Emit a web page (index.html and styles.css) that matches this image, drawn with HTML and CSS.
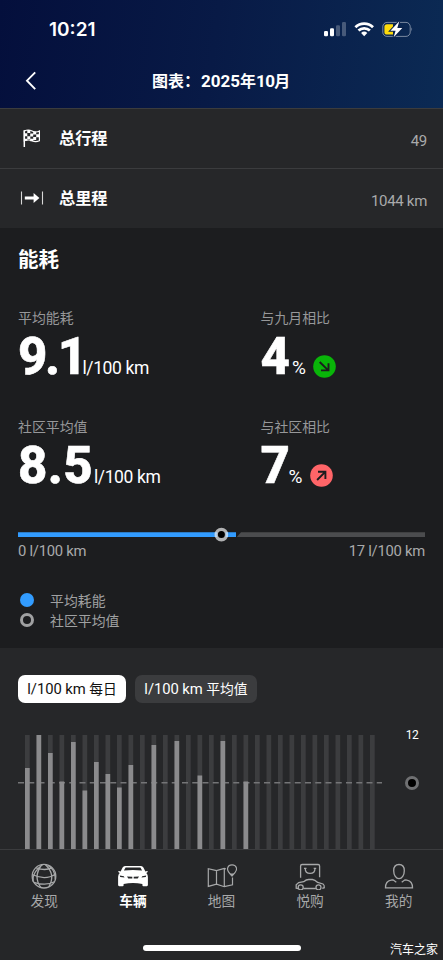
FILE: index.html
```html
<!DOCTYPE html>
<html lang="zh-CN">
<head>
<meta charset="utf-8">
<title>图表</title>
<link rel="stylesheet" href="styles.css">
</head>
<body>
<div class="app">
  <header class="header">
    <div class="status">
      <span class="clock">10:21</span>
      <svg class="status-icons" width="92" height="20" viewBox="322 20 92 20">
        <g fill="#fff"><rect x="324" y="31" width="4" height="5.2" rx="1.2"/><rect x="330" y="28.3" width="4" height="7.9" rx="1.2"/></g>
        <g fill="#fff" opacity=".25"><rect x="336" y="25.2" width="4" height="11" rx="1.2"/><rect x="342" y="22" width="4" height="14.2" rx="1.2"/></g>
        <g fill="none" stroke="#fff" stroke-width="2.8"><path d="M355.4 27.2a12.6 12.6 0 0 1 17.6 0"/><path d="M358.5 30.6a8.2 8.2 0 0 1 11.4 0"/></g>
        <path d="M364.2 36.2l-3.1-3.2a4.5 4.5 0 0 1 6.2 0z" fill="#fff"/>
        <rect x="382.8" y="22.4" width="27.4" height="14" rx="4.2" fill="none" stroke="#fff" stroke-opacity=".45"/>
        <path d="M411.4 27.2q1.7 2 0 4.4z" fill="#fff" opacity=".5"/>
        <path d="M387 24.2h6v10.4h-6q-2.6 0-2.6-2.6v-5.2q0-2.6 2.6-2.6z" fill="#fedb0b"/>
        <path d="M399.3 21.2l-8.9 9.6h5.2l-2 6.5 8.7-9.4h-5z" fill="#fff" stroke="#0b234c" stroke-width="2" paint-order="stroke"/>
      </svg>
    </div>
    <div class="nav">
      <svg class="back" width="12" height="20" viewBox="0 0 12 20"><path d="M10.2 1.4L2 9.7l8.2 8.5" fill="none" stroke="#fff" stroke-width="1.9"/></svg>
      <h1 class="title">图表：<span class="title-num">2025</span>年<span class="title-ten">10</span>月</h1>
    </div>
  </header>

  <section class="rows">
    <div class="row">
      <svg class="row-icon" width="24" height="24" viewBox="20 126 24 24">
        <path d="M24.3 129.2V146" stroke="#fff" stroke-width="1.5"/>
        <path d="M24.3 130q4-2 7.8 0t7.3 0v9.8q-3.8 1.6-7.3 0t-7.8 0z" fill="none" stroke="#fff" stroke-width="1.2"/>
        <path d="M27.3 129h3v3.1h-3zM33.2 130.6h3v3h-3zM24.3 132.2h3v3h-3zM30.2 132.4h3v3h-3zM36.2 133.2h3v3h-3zM27.3 135.2h3v3h-3zM33.2 136h3v3h-3zM24.3 137.8h3v2h-3zM30.2 137.8h3v2.5h-3z" fill="#fff"/>
      </svg>
      <span class="row-name">总行程</span>
      <span class="row-value">49</span>
    </div>
    <div class="row">
      <svg class="row-icon" width="24" height="24" viewBox="20 186 24 24">
        <path d="M21.5 191.5v13M42.5 191.5v13" stroke="#d8d8d8" stroke-width="1.1"/>
        <path d="M24.800 196.400h8.800V193l5.800 5-5.800 5v-3.400h-8.800z" fill="#fff"/>
      </svg>
      <span class="row-name">总里程</span>
      <span class="row-value">1044 km</span>
    </div>
  </section>

  <section class="usage">
    <h2 class="heading">能耗</h2>
    <div class="stats">
      <div class="stat">
        <div class="label">平均能耗</div>
        <div class="figure"><span class="big narrow">9.1</span><span class="unit">l/100 km</span></div>
      </div>
      <div class="stat">
        <div class="label">与九月相比</div>
        <div class="figure"><span class="big four">4</span><span class="unit">%</span>
          <svg class="badge" width="23" height="23" viewBox="0 0 23 23"><circle cx="11.5" cy="11.5" r="11.3" fill="#09b509"/><path d="M6.7 7l7.8 7.6M8 15.4h7.5V8.2" fill="none" stroke="#1b1c1e" stroke-width="1.9"/></svg>
        </div>
      </div>
      <div class="stat">
        <div class="label">社区平均值</div>
        <div class="figure"><span class="big">8.5</span><span class="unit">l/100 km</span></div>
      </div>
      <div class="stat">
        <div class="label">与社区相比</div>
        <div class="figure"><span class="big seven">7</span><span class="unit">%</span>
          <svg class="badge" width="23" height="23" viewBox="0 0 23 23"><circle cx="11.5" cy="11.5" r="11.3" fill="#ff6568"/><path d="M7.1 16l7.9-7.9M8 7.7h7.4v7.2" fill="none" stroke="#1b1c1e" stroke-width="1.9"/></svg>
        </div>
      </div>
    </div>
    <svg class="slider" width="407" height="16" viewBox="0 0 407 16">
      <path d="M0 5.2h218v4.8H0z" fill="#329cff"/>
      <path d="M223 5.2h184v4.8H218.8z" fill="#4b4c4e"/>
      <circle cx="203.4" cy="7.6" r="4.5" fill="#000"/>
      <circle cx="203.4" cy="7.6" r="5.2" fill="none" stroke="#b0b1b2" stroke-width="3.4"/>
      <path d="M199.3 5.2h-2.5v4.8h2.5q-1.2-2.4 0-4.8M207.5 5.2h2.5v4.8h-2.5q1.2-2.4 0-4.8" fill="#b3d7fb"/>
    </svg>
    <div class="scale"><span>0 l/100 km</span><span>17 l/100 km</span></div>
    <ul class="legend">
      <li><i class="dot"></i>平均耗能</li>
      <li><i class="ring"></i>社区平均值</li>
    </ul>
  </section>

  <section class="daily">
    <div class="pills">
      <span class="pill active"><span class="pill-unit">l/100 km</span> 每日</span>
      <span class="pill"><span class="pill-unit">l/100 km</span> 平均值</span>
    </div>
    <div class="plot">
      <svg class="bars" width="364" height="114" viewBox="18 735 364 114">
        <g id="tracks" fill="#3c3d3f"></g>
        <path d="M18 782.8h364" stroke="#747577" stroke-width="1.4" stroke-dasharray="6 4.25"/>
        <g id="values" fill="#8b8b8d"></g>
      </svg>
      <div class="axis"><span class="max">12</span><i class="ring mean"></i></div>
    </div>
  </section>

  <nav class="tabs">
    <div class="tab">
      <svg width="32" height="28" viewBox="28.3 862 32 28" fill="none" stroke="#a7a8a9" stroke-width="1.3">
        <circle cx="44.3" cy="876.2" r="11.8"/><path d="M41.8 865q-8.6 12-.6 22.500M45.500 864.500q11 10 3.500 22.500M43 864.500q-10.500 7.500-9.800 17M48 865.200q7.500 4 7.600 14M36.500 867.800q9 3.500 16-.2M32.600 874.500q13 6.500 23.300-.5M34.200 882.300q12 4 20.500-.5"/>
      </svg>
      <span>发现</span>
    </div>
    <div class="tab current">
      <svg width="32" height="28" viewBox="117 862 32 28">
        <path d="M125 866h16q1.600 0 2.400 1.600l2 3.900 1.600-.5q1 0 .7 1.100l-1.400 1q1.600 1.600 1.600 4v8q0 1.100-1.100 1.100h-3.400q-1 0-1-1v-1.300q-9.400-1.600-18.800 0v1.300q0 1-1 1h-3.400q-1.100 0-1.100-1.100v-8q0-2.400 1.600-4l-1.400-1q-.3-1.100.7-1.100l1.600.5 2-3.900q.8-1.600 2.400-1.600z" fill="#fff"/>
        <path d="M125.600 867.500h14.800l1.700 3q-9.100-1.200-18.200 0zM119.800 875.600l4 .7.700 1.300-4.300-.5zM146.200 875.600l-4 .7-.7 1.300 4.300-.5zM127 876.400l5.300.3v1.700h-4zM139 876.400l-5.300.3v1.700h4z" fill="#252628"/>
      </svg>
      <span>车辆</span>
    </div>
    <div class="tab">
      <svg width="32" height="28" viewBox="205.5 862 32 28" fill="none" stroke="#a7a8a9" stroke-width="1.2">
        <path d="M226.300 868.800l-1.500-.4-7.800 2.300-8.200-2v17.700l8.200-2.300 7.800 2.600 8.200-1.900v-7.300M217 870.600v13.500M224.800 868.500v18"/><path d="M232.500 876q-4.500-4.500-4.500-7.300a4.600 4.600 0 0 1 9.100 0q0 2.800-4.600 7.300z"/><path d="M230.300 873.500h4.500l-2.300 2.700z" fill="#a7a8a9" stroke="none"/>
      </svg>
      <span>地图</span>
    </div>
    <div class="tab">
      <svg width="32" height="28" viewBox="294 862 32 28" fill="none" stroke="#a7a8a9" stroke-width="1.3">
        <path d="M300.600 877.800V866q0-1.500 1.500-1.500h16q1.500 0 1.500 1.500v11.200"/><path d="M305.200 868.200q0 5.200 4.900 5.200t4.900-5.200M304 868.300h2.500M313.700 868.300h2.500"/><path d="M298.200 888.500l-2-.4v-3.300l2.500-2.300 5-.8q2.500-2.200 5-2.200h3.800q2.300.2 5.200 2.900l5.300 1.600q1.500.9 1.300 3.700l-2 .7M303.300 888.500h12.600"/><circle cx="300.700" cy="887.300" r="2.500"/><circle cx="318.500" cy="887.300" r="2.500"/>
      </svg>
      <span>悦购</span>
    </div>
    <div class="tab">
      <svg width="32" height="28" viewBox="382.700 862 32 28" fill="none" stroke="#a7a8a9" stroke-width="1.300">
        <path d="M398.700 864.500c3.500 0 5.300 2.300 5.300 6.200 0 4.600-2.400 8-5.300 8s-5.300-3.400-5.300-8c0-3.900 1.800-6.200 5.300-6.200z"/><path d="M396 882.300l-3.300-2.500q-.9 0-2 .4-5.500 1-5.500 7.600h27q0-6.600-5.500-7.600-1.100-.4-2-.4l-3.300 2.500"/>
      </svg>
      <span>我的</span>
    </div>
    <div class="home"></div>
    <div class="source">汽车之家</div>
  </nav>
</div>
<script src="chart.js"></script>
</body>
</html>
```
FILE: styles.css
```css
* { box-sizing: border-box; }
body { margin: 0; background: #1c1d1f; }
.app {
  width: 443px; height: 960px; overflow: hidden;
  display: flex; flex-direction: column;
  font-family: Roboto, "Noto Sans CJK SC", sans-serif;
  color: #fff;
}
h1, h2, ul { margin: 0; padding: 0; list-style: none; }
svg { display: block; flex: none; }

.header { height: 108px; background: linear-gradient(98deg, #040f3c 0%, #081a46 48%, #0b2a54 100%); }
.status { height: 56px; padding: 20px 29px 0 49px; display: flex; justify-content: space-between; }
.clock { font: 600 19px/20px Inter, sans-serif; }
.nav { height: 52px; padding-left: 25px; display: flex; align-items: center; }
.back { margin-top: -3px; }
.title { margin: -2px 0 0 115px; font-size: 16px; font-weight: 700; line-height: 24px; white-space: nowrap; }
.title-num { font-size: 17px; letter-spacing: 0; margin-left: 1px; }
.title-ten { font-size: 17px; letter-spacing: -.6px; }

.row { height: 60px; padding: 0 16px 0 20px; display: flex; align-items: center; background: #262729; border-top: 1.5px solid #3b3c3e; }
.row + .row { height: 59.5px; }
.row-icon { margin-right: 15px; }
.row-name { flex: 1; font-size: 16.2px; font-weight: 700; line-height: 24px; margin-top: 1px; }
.row-value { font-size: 15px; letter-spacing: -.3px; color: #a9aaab; line-height: 24px; margin-top: 5px; }

.usage { height: 420.5px; padding: 18px 18px 0; background: #1c1d1f; }
.heading { font-size: 20.5px; line-height: 28px; font-weight: 700; }
.stats { margin-top: 34px; display: grid; grid-template-columns: 242.5px 1fr; grid-auto-rows: 109px; }
.label { font-size: 13.9px; line-height: 20px; color: #97989a; }
.figure { display: flex; align-items: baseline; height: 56px; line-height: 58px; }
.big { font-size: 51px; font-weight: 800; width: 76px; letter-spacing: .3px; -webkit-text-stroke: .6px #fff; }
.big.narrow { width: 64.5px; letter-spacing: -2.4px; }
.big.four { width: 31.5px; }
.big.seven { width: 28px; }
.unit { font-size: 17.5px; letter-spacing: -.4px; }
.stat:nth-child(even) .unit { width: 16.5px; font-size: 19px; }
.badge { align-self: flex-start; margin: 27.5px 0 0 4.5px; }
.slider { margin-top: 1px; }
.scale { margin-top: -1.5px; display: flex; justify-content: space-between; font-size: 14.8px; line-height: 20px; letter-spacing: -.25px; color: #a9aaab; }
.legend { margin-top: 28.5px; }
.legend li { display: flex; align-items: center; height: 20.5px; font-size: 13.9px; color: #a0a1a2; }
.dot, .ring { flex: none; width: 14px; height: 14px; border-radius: 50%; margin: 0 16px 0 2px; }
.dot { background: #329cff; }
.ring { border: 3.7px solid #a0a1a2; }

.daily { height: 201px; padding: 27px 0 0 18px; background: #262729; }
.pills { display: flex; gap: 9px; }
.pill { height: 28px; padding: 0 9.3px; border-radius: 7px; background: #3b3c3e; font-size: 13.8px; line-height: 29px; white-space: pre; }
.pill.active { background: #fff; color: #111; }
.pill-unit { font-size: 14.8px; letter-spacing: -.05px; }
.plot { margin-top: 32px; display: flex; }
.axis { width: 60px; display: flex; flex-direction: column; align-items: center; }
.max { font-size: 12px; line-height: 16px; margin-top: -8px; letter-spacing: -.4px; }
.mean { margin: 33px 0 0; border-color: #6f7072; background: #000; }

.tabs { position: relative; height: 111px; padding-top: 12px; border-top: 1.5px solid #3b3c3e; background: #252628; display: grid; grid-template-columns: repeat(5, 1fr); }
.tab { display: flex; flex-direction: column; align-items: center; font-size: 13.7px; line-height: 20px; color: #a7a8a9; }
.tab span { margin-top: .5px; }
.tab.current { color: #fff; font-weight: 700; }
.home { position: absolute; left: 143px; top: 95px; width: 157.5px; height: 6px; border-radius: 3px; background: #fff; }
.source { position: absolute; right: 5px; bottom: 2px; font-size: 12px; line-height: 16px; }
```
FILE: chart.js
```javascript
const bottom = 849, top0 = 735;
const tops = [768, 735, 753, 781.5, 742, 790.5, 762, 774, 787.5, 765, null, 745, null, 741, null, 775.5, null, 741, null, 781.5];
function bar(parent, index, y) {
  const rect = document.createElementNS("http://www.w3.org/2000/svg", "rect");
  rect.setAttribute("x", 25 + index * 11.5);
  rect.setAttribute("y", y);
  rect.setAttribute("width", 4.7);
  rect.setAttribute("height", bottom - y);
  document.getElementById(parent).appendChild(rect);
}
for (let day = 0; day < 31; day++) {
  bar("tracks", day, top0);
  if (tops[day]) bar("values", day, tops[day]);
}
```
